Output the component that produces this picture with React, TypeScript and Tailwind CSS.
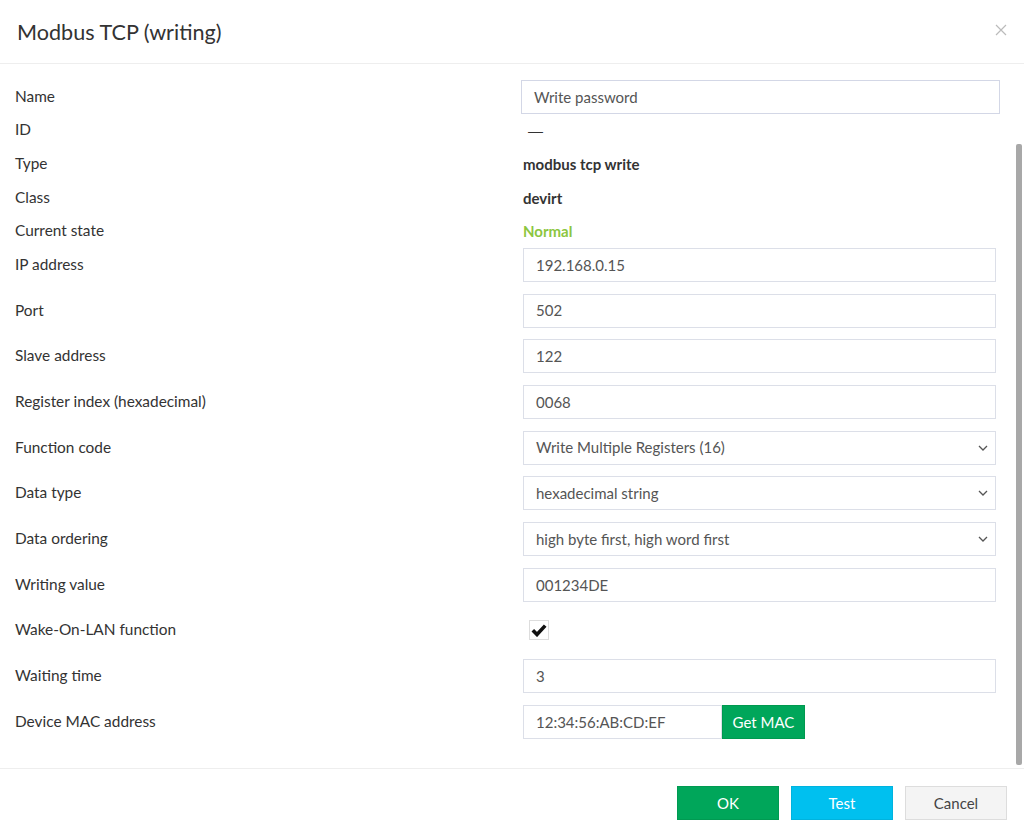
import React from 'react';

const font = { fontFamily: 'Lato, "Open Sans", sans-serif' };

const Chevron = () => (
  <svg width="10" height="6" viewBox="0 0 10 6" className="shrink-0">
    <path d="M1 1l4 4 4-4" fill="none" stroke="#555" strokeWidth="1.3" />
  </svg>
);

const TextBox: React.FC<{ value: string }> = ({ value }) => (
  <div className="h-[34px] w-[473px] border border-[#dcdfe8] bg-white px-3 flex items-center text-[15px] text-[#555]">
    {value}
  </div>
);

const SelectBox: React.FC<{ value: string }> = ({ value }) => (
  <div className="h-[34px] w-[473px] border border-[#dcdfe8] bg-white pl-3 pr-[7px] flex items-center justify-between text-[15px] text-[#555]">
    <span>{value}</span>
    <Chevron />
  </div>
);

const Row: React.FC<{ label: string; tall?: boolean; children: React.ReactNode }> = ({ label, tall, children }) => (
  <div className={`flex items-center ${tall ? 'h-[34px] mb-[11.7px]' : 'h-[33.6px]'}`}>
    <div className="w-[508px] shrink-0 text-[15.4px] text-[#333] pb-[1px]">{label}</div>
    <div className="flex-1">{children}</div>
  </div>
);

export default function App() {
  return (
    <div className="w-[1024px] h-[830px] bg-white flex flex-col overflow-hidden" style={font}>
      <header className="h-[64px] shrink-0 flex items-center justify-between pl-[17px] pr-[17px] border-b border-[#eeeeee]">
        <h1 className="text-[21.6px] text-[#333] leading-none pt-[2px]">Modbus TCP (writing)</h1>
        <svg width="12" height="12" viewBox="0 0 12 12" className="mb-[4px]">
          <path d="M1 1l10 10M11 1L1 11" stroke="#bbbbbb" strokeWidth="1.2" />
        </svg>
      </header>

      <div className="flex-1 flex min-h-0">
        <div className="flex-1 pl-[15px] pt-[16px]">
          <div className="flex items-center h-[33.6px]">
            <div className="w-[506px] shrink-0 text-[15.4px] text-[#333] pb-[1px]">Name</div>
            <div className="h-[34px] w-[479px] border border-[#d3d7e6] bg-white px-3 flex items-center text-[15px] text-[#555]">
              Write password
            </div>
          </div>
          <Row label="ID">
            <span className="pl-[5px] text-[15px] text-[#333]" style={{ fontFamily: '"Liberation Sans", sans-serif' }}>—</span>
          </Row>
          <Row label="Type">
            <span className="text-[15px] font-bold text-[#333]">modbus tcp write</span>
          </Row>
          <Row label="Class">
            <span className="text-[15px] font-bold text-[#333]">devirt</span>
          </Row>
          <Row label="Current state">
            <span className="text-[15px] font-bold text-[#8cc63f]">Normal</span>
          </Row>
          <Row label="IP address" tall>
            <TextBox value="192.168.0.15" />
          </Row>
          <Row label="Port" tall>
            <TextBox value="502" />
          </Row>
          <Row label="Slave address" tall>
            <TextBox value="122" />
          </Row>
          <Row label="Register index (hexadecimal)" tall>
            <TextBox value="0068" />
          </Row>
          <Row label="Function code" tall>
            <SelectBox value="Write Multiple Registers (16)" />
          </Row>
          <Row label="Data type" tall>
            <SelectBox value="hexadecimal string" />
          </Row>
          <Row label="Data ordering" tall>
            <SelectBox value="high byte first, high word first" />
          </Row>
          <Row label="Writing value" tall>
            <TextBox value="001234DE" />
          </Row>
          <Row label="Wake-On-LAN function" tall>
            <div className="ml-[6px] w-[20px] h-[20px] border border-[#dddddd] flex items-center justify-center">
              <svg width="16" height="14" viewBox="0 0 16 14">
                <path d="M1.8 7.2l4.2 4.3L14.2 2.6" fill="none" stroke="#111" strokeWidth="3.6" />
              </svg>
            </div>
          </Row>
          <Row label="Waiting time" tall>
            <TextBox value="3" />
          </Row>
          <Row label="Device MAC address" tall>
            <div className="flex h-[34px]">
              <div className="w-[199px] border border-[#dcdfe8] px-3 flex items-center text-[15px] text-[#555]">
                12:34:56:AB:CD:EF
              </div>
              <button className="w-[83px] bg-[#00a65a] border border-[#00994f] text-white text-[15px]">Get MAC</button>
            </div>
          </Row>
        </div>
        <div className="w-[8px] shrink-0 pt-[80px] pb-[3px] pr-[2px] flex">
          <div className="w-[6px] flex-1 bg-[#a8a8a8] rounded-[2px]" />
        </div>
      </div>

      <footer className="h-[62px] shrink-0 border-t border-[#eeeeee] flex items-start justify-end gap-[12px] pt-[17px] pr-[17px]">
        <button className="w-[102px] h-[34px] bg-[#00a65a] border border-[#009a52] text-white text-[15px]">OK</button>
        <button className="w-[102px] h-[34px] bg-[#00c0ef] border border-[#00b3de] text-white text-[15px]">Test</button>
        <button className="w-[102px] h-[34px] bg-[#f4f4f4] border border-[#dddddd] text-[#444] text-[15px]">Cancel</button>
      </footer>
    </div>
  );
}
